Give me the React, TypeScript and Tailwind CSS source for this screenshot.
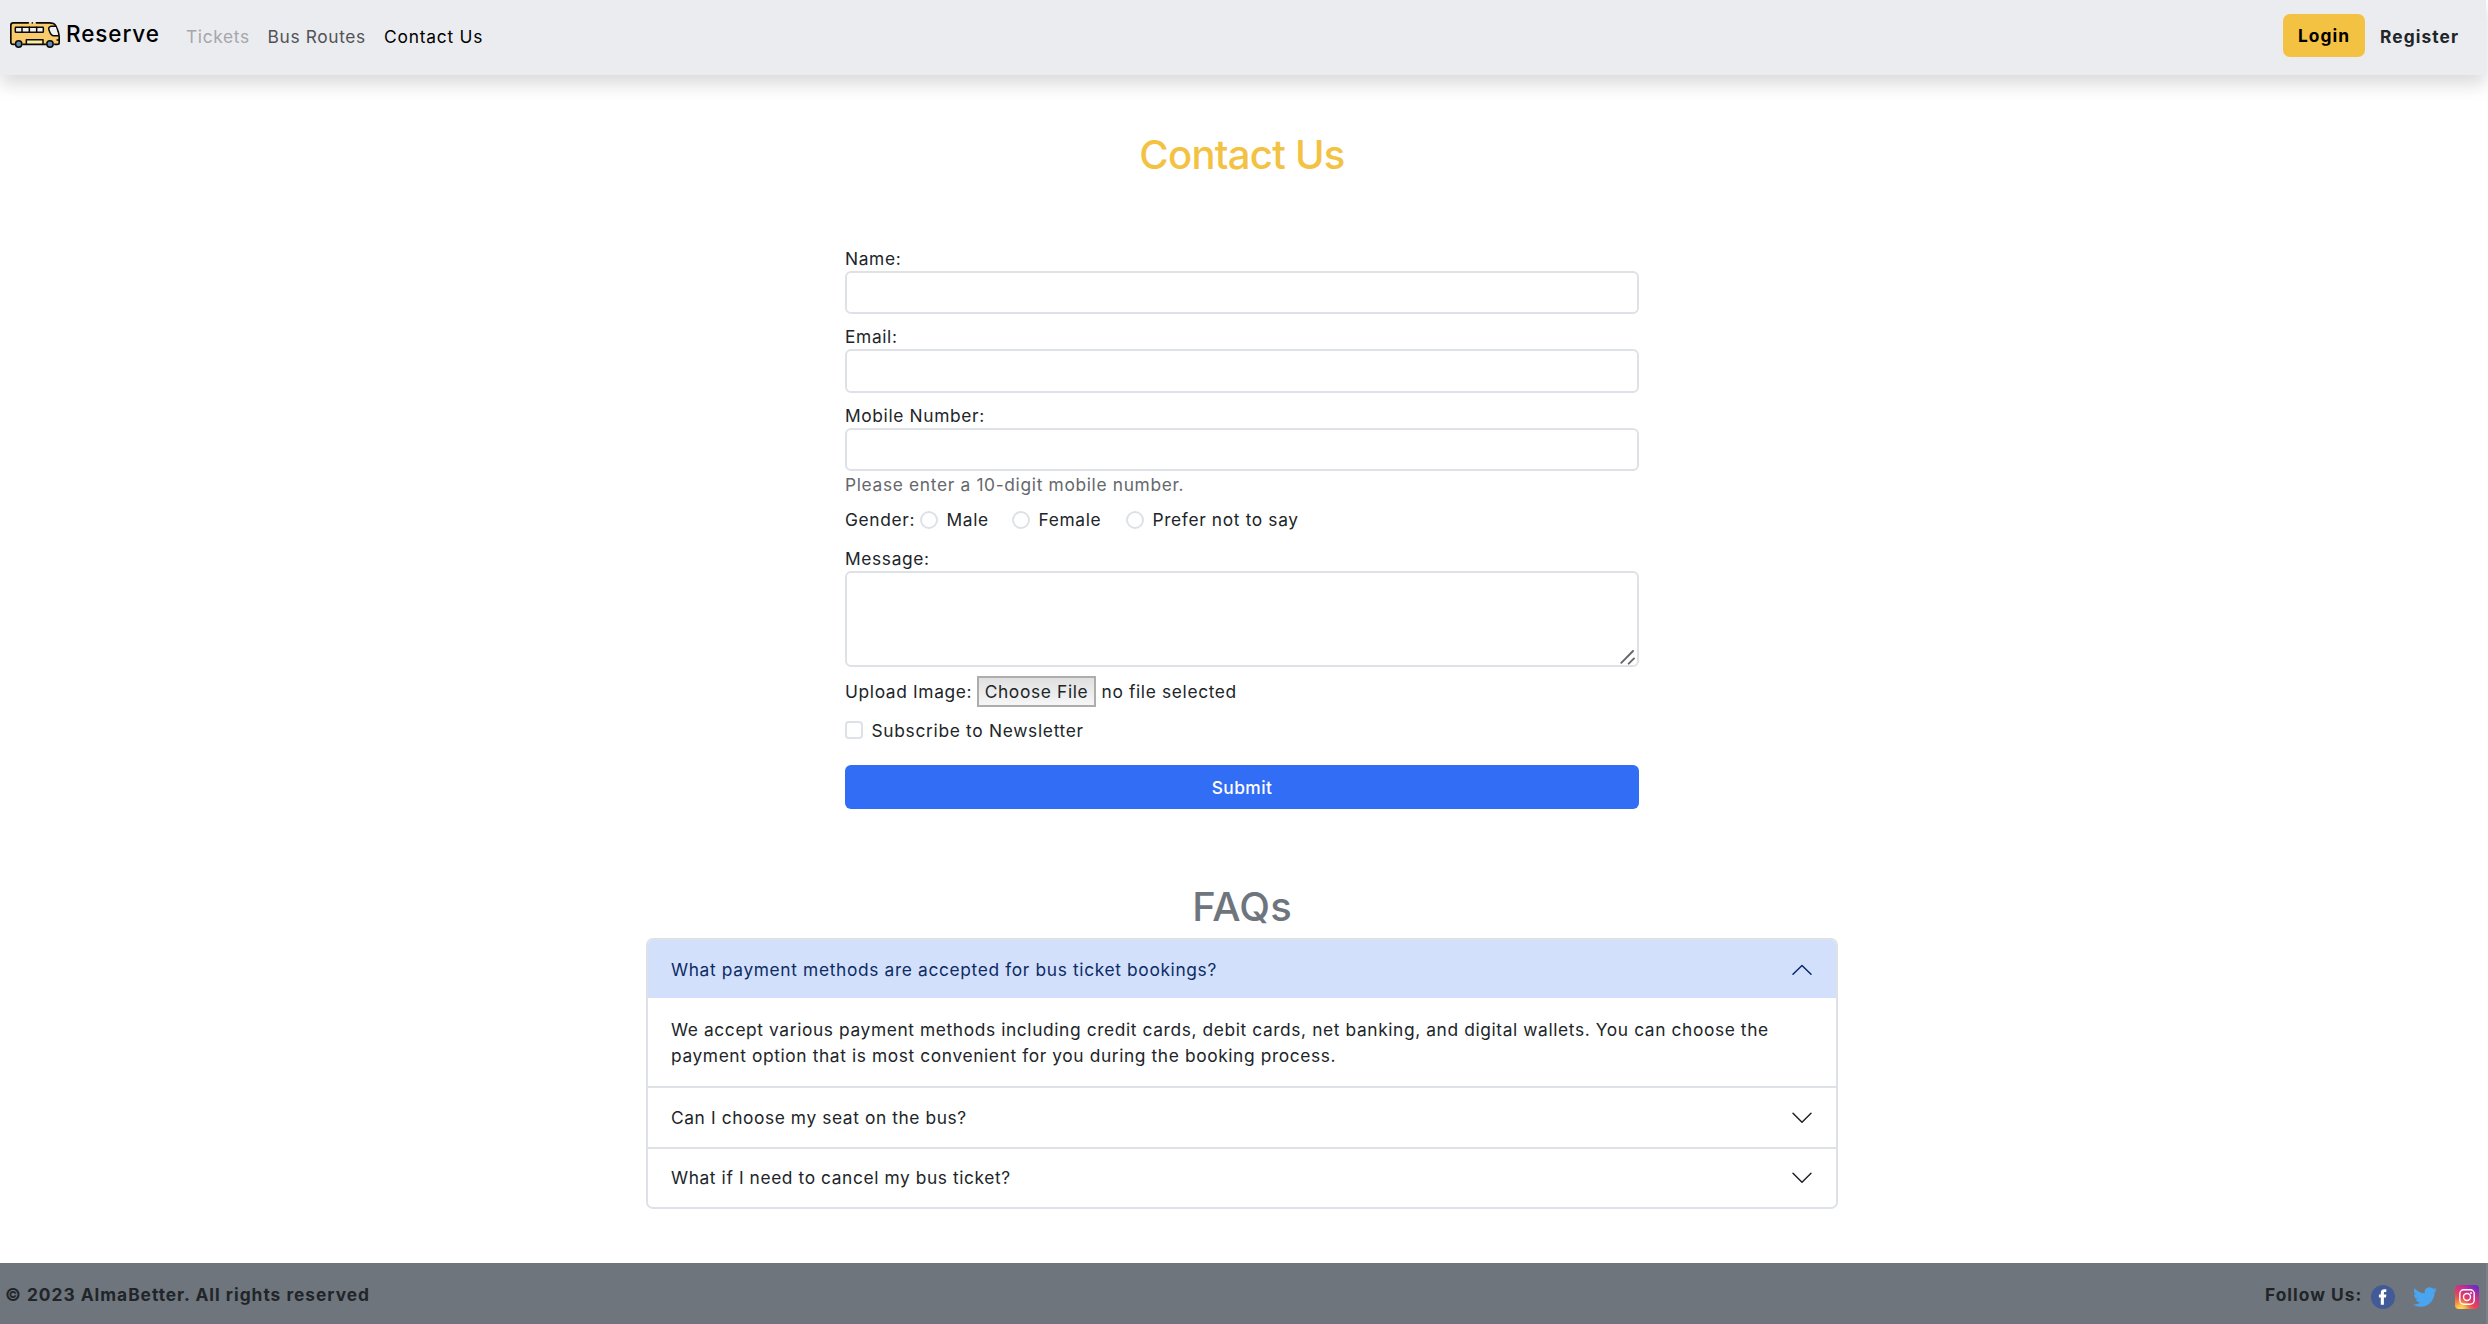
import React, { useState } from 'react';

function BusLogo() {
  return (
    <svg className="h-[26px] w-[50px] shrink-0" viewBox="30 24 150 78" fill="none" strokeLinecap="round" strokeLinejoin="round">
      <path d="M33 32Q33 27 39 27H150Q165 28 169 36L177 66V92H33Z" fill="#f9cb6b" />
      <path d="M85 26.500H40Q32.500 26.500 32.500 34V84Q32.500 91 39 91H43M109 26.500H148Q162 26.500 167 35Q177 56 177.500 68V86Q177.500 91 172 91H164M138 91H69" stroke="#0a0a0a" strokeWidth="5" />
      <path d="M97 26.500V26.600" stroke="#0a0a0a" strokeWidth="5" />
      <rect x="46" y="40" width="84" height="15" rx="2" fill="#f1f1f3" stroke="#0a0a0a" strokeWidth="4.500" />
      <path d="M66 40V55M88 40V55M110 40V55" stroke="#0a0a0a" strokeWidth="4.500" />
      <path d="M167 37H152Q144 40 147 48Q152 64 160 65H175" fill="#f1f1f3" stroke="#0a0a0a" strokeWidth="4.500" />
      <path d="M171 78H177" stroke="#0a0a0a" strokeWidth="4" />
      <path d="M79 91V77H129V91Z" fill="#fdeea6" stroke="#0a0a0a" strokeWidth="4.500" />
      <circle cx="56" cy="90" r="9.500" fill="#5f8bb0" stroke="#0a0a0a" strokeWidth="4.500" />
      <circle cx="150" cy="90" r="9.500" fill="#5f8bb0" stroke="#0a0a0a" strokeWidth="4.500" />
    </svg>
  );
}

function Chevron({ open = false }: { open?: boolean }) {
  return (
    <svg className={`h-[12px] w-[20px] shrink-0 ${open ? 'mt-[2px]' : ''}`} viewBox="0 0 20 12" fill="none" strokeLinecap="round" strokeLinejoin="round">
      <path d={open ? 'M1 10.300L10 1.500L19 10.300' : 'M1 1.300L10 10.300L19 1.300'} stroke={open ? '#0a2a6e' : '#212529'} strokeWidth="1.500" />
    </svg>
  );
}

function Facebook() {
  return (
    <svg className="size-6" viewBox="0 0 24 24">
      <circle cx="12" cy="12" r="12" fill="#435a98" />
      <path d="M9.800 19.800V12.400H7.900V9.600H9.800V7.900C9.800 5.500 10.900 4.300 13.300 4.300H15.300V7.100H14C13.100 7.100 12.900 7.500 12.900 8.200V9.600H15.300L15 12.400H12.900V19.800Z" fill="#fff" />
    </svg>
  );
}

function Twitter() {
  return (
    <svg className="size-6" viewBox="0 0 24 24">
      <path
        fill="#4ba4ee"
        d="M23.950 4.570a10 10 0 0 1-2.820.770 4.960 4.960 0 0 0 2.160-2.720c-.950.550-2 .950-3.130 1.180a4.920 4.920 0 0 0-8.380 4.480C7.690 8.100 4.070 6.130 1.640 3.160a4.820 4.820 0 0 0-.670 2.480c0 1.710.870 3.210 2.190 4.100a4.900 4.900 0 0 1-2.230-.620v.060a4.920 4.920 0 0 0 3.950 4.830 5 5 0 0 1-2.210.080 4.940 4.940 0 0 0 4.600 3.420A9.870 9.870 0 0 1 0 19.540a13.990 13.990 0 0 0 7.550 2.210c9.050 0 14-7.500 14-13.980 0-.210 0-.420-.020-.630a9.940 9.940 0 0 0 2.460-2.550z"
      />
    </svg>
  );
}

function Instagram() {
  return (
    <svg className="size-6" viewBox="0 0 24 24" fill="none">
      <defs>
        <linearGradient id="ig-base" x1="3" y1="24" x2="20" y2="0" gradientUnits="userSpaceOnUse">
          <stop offset="0" stopColor="#f9a03c" />
          <stop offset="0.400" stopColor="#e8405c" />
          <stop offset="0.700" stopColor="#c22f92" />
          <stop offset="1" stopColor="#6a28c8" />
        </linearGradient>
        <radialGradient id="ig-glow" cx="6" cy="24" r="11" gradientUnits="userSpaceOnUse">
          <stop offset="0" stopColor="#ffe25a" />
          <stop offset="0.400" stopColor="#fdc04a" stopOpacity="0.900" />
          <stop offset="1" stopColor="#f9803c" stopOpacity="0" />
        </radialGradient>
      </defs>
      <rect width="24" height="24" rx="4" fill="url(#ig-base)" />
      <rect width="24" height="24" rx="4" fill="url(#ig-glow)" />
      <rect x="4.800" y="4.800" width="14.400" height="14.400" rx="4" stroke="#fff" strokeWidth="1.400" />
      <circle cx="12" cy="12" r="3.500" stroke="#fff" strokeWidth="1.400" />
      <circle cx="16" cy="8" r="0.900" fill="#fff" />
    </svg>
  );
}

const fieldBox = 'block w-full rounded-[6px] border-2 border-[#dee2e6] bg-white px-3 outline-none';
const labelText = 'block h-[25px]';

const faqs = [
  {
    q: 'What payment methods are accepted for bus ticket bookings?',
    a: 'We accept various payment methods including credit cards, debit cards, net banking, and digital wallets. You can choose the payment option that is most convenient for you during the booking process.',
  },
  { q: 'Can I choose my seat on the bus?', a: 'Yes, seats can be chosen while booking.' },
  { q: 'What if I need to cancel my bus ticket?', a: 'Tickets can be cancelled before departure.' },
];

export default function App() {
  const [open, setOpen] = useState(0);
  return (
    <div className="flex h-[1324px] flex-col overflow-hidden bg-white pr-[2px] font-['Inter','Liberation_Sans',sans-serif] text-[17.33px] leading-[26px] tracking-[0.650px] text-[#212529]">
      <header className="relative flex h-[75px] shrink-0 items-start bg-[#ebecf0] pl-[10px] pt-[14px] shadow-[0_9px_17px_rgba(0,0,0,0.15)]">
        <a className="flex w-[176px] items-center pt-[8px]">
          <BusLogo />
          <span className="-mt-[2px] pl-[6px] text-[22.500px] font-medium tracking-[0.900px] text-black">Reserve</span>
        </a>
        <nav className="flex flex-1 pt-[10px]">
          <a className="w-[81.500px] text-[#a5a6aa]">Tickets</a>
          <a className="w-[116.500px] text-[#525356]">Bus Routes</a>
          <a className="tracking-[0.800px] text-black">Contact Us</a>
        </nav>
        <button className="h-[43px] w-[82px] rounded-[7px] bg-[#f4c243] pt-[1px] font-bold tracking-[1.050px] text-black">Login</button>
        <a className="w-[121px] pl-[15px] pt-[10px] font-bold tracking-[1.100px]">Register</a>
      </header>

      <main className="flex flex-1 flex-col items-center pr-[2px]">
        <h1 className="mt-[56px] text-[40px] font-medium leading-[48px] tracking-[-0.730px] text-[#f4c243]">Contact Us</h1>

        <form className="mt-[67px] w-[794px]" onSubmit={(e) => e.preventDefault()}>
          <label className={labelText}>Name:</label>
          <input className={`${fieldBox} h-[43px]`} />
          <label className={`${labelText} mt-[10px]`}>Email:</label>
          <input className={`${fieldBox} h-[44px]`} />
          <label className={`${labelText} mt-[10px]`}>Mobile Number:</label>
          <input className={`${fieldBox} h-[43px]`} />
          <p className="mt-[1px] text-[#65686c] tracking-[0.670px]">Please enter a 10-digit mobile number.</p>

          <div className="mt-[9px] flex h-[26px]">
            <span className="w-[75px]">Gender:</span>
            <label className="flex w-[92px] gap-[8.500px]">
              <input type="radio" name="gender" className="mt-[4px] size-[18px] appearance-none rounded-full border-2 border-[#dee2e6] bg-white" />
              Male
            </label>
            <label className="flex w-[114px] gap-[8.500px]">
              <input type="radio" name="gender" className="mt-[4px] size-[18px] appearance-none rounded-full border-2 border-[#dee2e6] bg-white" />
              Female
            </label>
            <label className="flex gap-[8.500px]">
              <input type="radio" name="gender" className="mt-[4px] size-[18px] appearance-none rounded-full border-2 border-[#dee2e6] bg-white" />
              Prefer not to say
            </label>
          </div>

          <label className={`${labelText} mt-[13px]`}>Message:</label>
          <div className="relative">
            <textarea className={`${fieldBox} h-[96px] resize-none`} />
            <svg className="absolute bottom-[2px] right-[4px] h-[15px] w-[15px]" viewBox="0 0 15 15" stroke="#666" strokeWidth="1.900" strokeLinecap="round">
              <path d="M1.300 12.800L13 1M8.700 13.700L14 8.400" />
            </svg>
          </div>

          <div className="mt-[9px] flex h-[31px] items-start">
            <span className="w-[132px] pt-[3px]">Upload Image:</span>
            <button type="button" className="h-[31px] w-[119px] border-2 border-[#adadad] bg-gradient-to-b from-[#e0e0e0] to-[#f6f6f6] pt-[1px] leading-[26px] tracking-[0.650px]">
              Choose File
            </button>
            <span className="pl-[5.500px] pt-[3px]">no file selected</span>
          </div>

          <label className="mt-[11px] flex h-[26px]">
            <input type="checkbox" className="mr-[8.500px] mt-[3px] size-[18px] appearance-none rounded-[4px] border-2 border-[#dee2e6] bg-white" />
            <span className="tracking-[0.700px]">Subscribe to Newsletter</span>
          </label>

          <button className="mt-[21px] block h-[44px] w-full rounded-[6px] bg-[#326df6] pt-[1px] font-medium tracking-[0.450px] text-white">Submit</button>
        </form>

        <h2 className="mt-[74px] text-[40px] font-medium leading-[48px] tracking-[0.140px] text-[#6e757c]">FAQs</h2>

        <section className="mt-[7px] w-[1192px] overflow-hidden rounded-[7px] border-2 border-[#dee2e6]">
          {faqs.map((f, i) => (
            <div key={f.q} className={i ? 'border-t-2 border-[#dee2e6]' : ''}>
              <button
                onClick={() => setOpen(open === i ? -1 : i)}
                className={`flex w-full items-center justify-between pl-[23px] pr-[24px] text-left ${
                  i === 1 ? 'h-[59px]' : 'h-[58px]'
                } ${open === i ? 'bg-[#d3e0fb] text-[#0d2c66]' : 'bg-white'}`}
              >
                <span className={i === 0 ? 'pt-[1px] tracking-[0.650px]' : i === 1 ? 'pt-[1px] tracking-[0.600px]' : 'tracking-[0.600px]'}>{f.q}</span>
                <Chevron open={open === i} />
              </button>
              {open === i && <p className="h-[88px] pl-[23px] pr-[24px] pt-[19px] tracking-[0.615px]">{f.a}</p>}
            </div>
          ))}
        </section>
      </main>

      <footer className="-mr-[2px] flex h-[61px] shrink-0 items-start border-r-2 border-[#7b8188] bg-[#6e757c] pl-[5px] pt-[19px] font-bold">
        <span className="flex-1 tracking-[0.990px]">© 2023 AlmaBetter. All rights reserved</span>
        <span className="w-[106px] tracking-[1.020px]">Follow Us:</span>
        <span className="flex gap-[18px] pr-[7px] pt-[3px]">
          <Facebook />
          <Twitter />
          <Instagram />
        </span>
      </footer>
    </div>
  );
}
